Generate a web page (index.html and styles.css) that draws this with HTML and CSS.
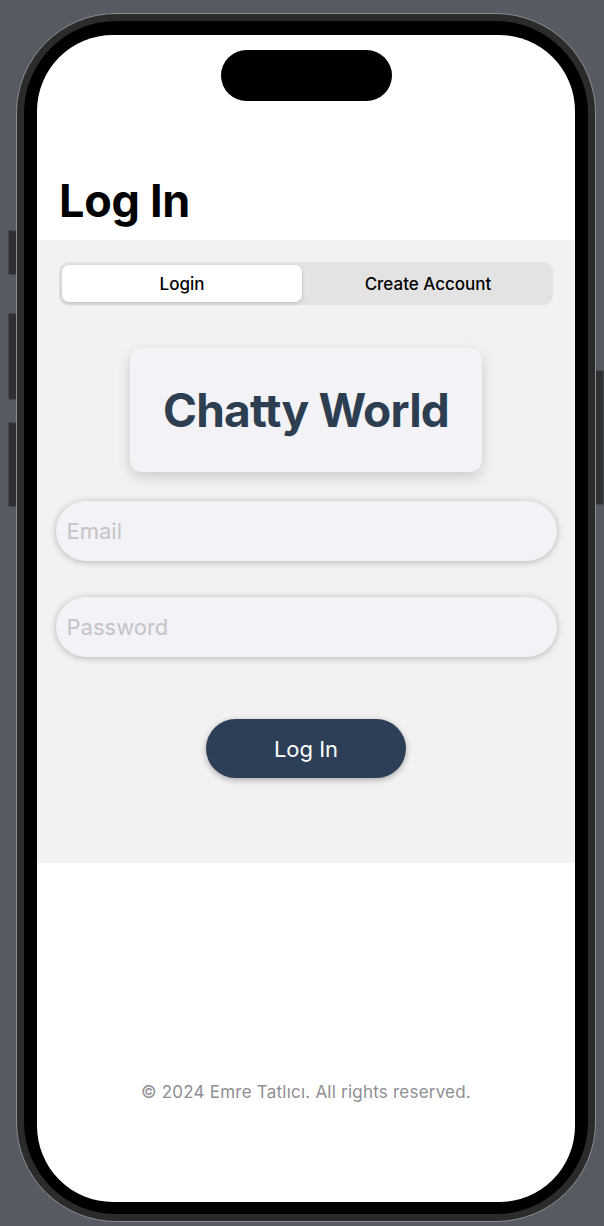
FILE: index.html
```html
<!DOCTYPE html>
<html lang="en">
<head>
<meta charset="utf-8">
<title>Log In</title>
<link rel="stylesheet" href="styles.css">
</head>
<body>
<div class="device">
  <div class="side side-left">
    <div class="btn btn-action"></div>
    <div class="btn btn-volup"></div>
    <div class="btn btn-voldown"></div>
  </div>
  <div class="frame">
    <div class="bezel">
      <div class="screen">
        <header class="nav">
          <div class="island"></div>
          <h1 class="title">Log In</h1>
        </header>
        <main class="panel">
          <div class="segmented">
            <div class="seg seg-active">Login</div>
            <div class="seg">Create Account</div>
          </div>
          <div class="brand-card">
            <span class="brand">Chatty World</span>
          </div>
          <div class="field"><span class="placeholder">Email</span></div>
          <div class="field field-second"><span class="placeholder">Password</span></div>
          <div class="primary-btn">Log In</div>
        </main>
        <footer class="footer">© 2024 Emre Tatlıcı. All rights reserved.</footer>
      </div>
    </div>
  </div>
  <div class="side side-right">
    <div class="btn btn-power"></div>
  </div>
</div>
</body>
</html>
```
FILE: styles.css
```css
* { box-sizing: border-box; }

html, body {
  margin: 0;
  padding: 0;
  background: #565b63;
  width: 604px;
  height: 1226px;
  overflow: hidden;
  font-family: Inter, "Noto Sans", "Liberation Sans", sans-serif;
}

.device {
  display: flex;
  align-items: flex-start;
  padding: 13px 0 0 8px;
}

.side {
  width: 8px;
  display: flex;
  flex-direction: column;
}

.btn {
  width: 8px;
  background: #2f3033;
  border: 1px solid #45484d;
}

.side-left .btn { border-right: none; border-radius: 2px 0 0 2px; }
.side-right .btn { border-left: none; border-radius: 0 2px 2px 0; }

.btn-action { margin-top: 217px; height: 45px; }
.btn-volup { margin-top: 38px; height: 87px; }
.btn-voldown { margin-top: 22px; height: 85px; }
.btn-power { margin-top: 357px; height: 135px; }

.frame {
  width: 580px;
  height: 1209px;
  border: 1px solid #8b8d91;
  border-radius: 100px;
  background: #2b2b2c;
  padding: 7px;
}

.bezel {
  width: 100%;
  height: 100%;
  background: #000;
  border-radius: 92px;
  padding: 14px 13px 12px 13px;
}

.screen {
  width: 538px;
  height: 1167px;
  background: #fff;
  border-radius: 76px;
  overflow: hidden;
  display: flex;
  flex-direction: column;
}

.nav {
  height: 205px;
  display: flex;
  flex-direction: column;
  padding-top: 15px;
}

.island {
  align-self: center;
  width: 171px;
  height: 51px;
  border-radius: 26px;
  background: #000;
}

.title {
  margin: 73px 0 0 22px;
  font-size: 45px;
  line-height: 54px;
  font-weight: 700;
  color: #000;
  letter-spacing: -0.3px;
}

.panel {
  height: 623px;
  background: #f2f2f2;
  display: flex;
  flex-direction: column;
  align-items: center;
  padding-top: 22px;
}

.segmented {
  width: 494px;
  height: 43px;
  background: #e3e3e3;
  border-radius: 9px;
  padding: 3px;
  display: flex;
}

.seg {
  flex: 1;
  display: flex;
  align-items: center;
  justify-content: center;
  font-size: 17px;
  font-weight: 500;
  color: #000;
  border-radius: 7px;
}

.seg-active {
  flex: 0 0 240px;
  margin-right: 4px;
  background: #fff;
  box-shadow: 0 0 0 0.5px rgba(0,0,0,0.06), 0 2px 4px rgba(0,0,0,0.12);
}

.brand-card {
  margin-top: 43px;
  width: 352px;
  height: 124px;
  background: #f2f2f7;
  border-radius: 12px;
  box-shadow: 0 5px 14px rgba(0,0,0,0.16);
  display: flex;
  align-items: center;
  justify-content: center;
}

.brand {
  font-size: 46px;
  font-weight: 700;
  color: #2c3e50;
  letter-spacing: -0.8px;
}

.field {
  margin-top: 29px;
  width: 501px;
  height: 60px;
  background: #f2f2f7;
  border-radius: 30px;
  box-shadow: 0 1px 7px rgba(0,0,0,0.26);
  display: flex;
  align-items: center;
  padding-left: 11px;
}

.field-second { margin-top: 36px; }

.placeholder {
  font-size: 22px;
  color: #c4c4c9;
}

.primary-btn {
  margin-top: 62px;
  width: 200px;
  height: 59px;
  border-radius: 30px;
  background: #2c3f57;
  color: #fff;
  font-size: 22px;
  display: flex;
  align-items: center;
  justify-content: center;
  box-shadow: 0 2px 6px rgba(0,0,0,0.3);
}

.footer {
  margin-top: 219px;
  text-align: center;
  font-size: 17px;
  line-height: 20px;
  letter-spacing: 0.22px;
  color: #8e8e93;
}
```
